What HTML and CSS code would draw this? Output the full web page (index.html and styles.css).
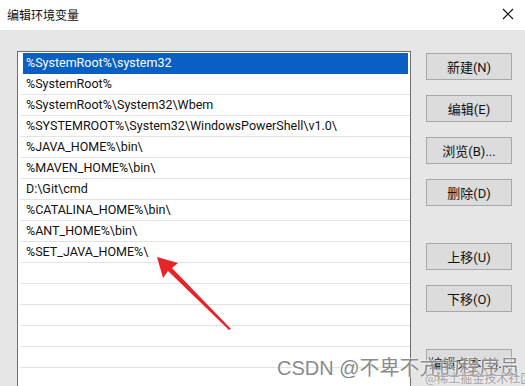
FILE: index.html
```html
<!DOCTYPE html>
<html lang="zh-CN">
<head>
    <meta charset="UTF-8">
    <title>编辑环境变量</title>
    <link rel="stylesheet" href="styles.css">
</head>
<body>
    <div class="dialog">
        <div class="titlebar">
            <span class="title">编辑环境变量</span>
            <svg class="close" width="12" height="12" viewBox="0 0 12 12">
                <path d="M1 1 L11 11 M11 1 L1 11" stroke="#111" stroke-width="1.2" fill="none"/>
            </svg>
        </div>

        <div class="content">
            <!-- lista de caminhos -->
            <div class="list">
                <div class="row selected">%SystemRoot%\system32</div>
                <div class="row">%SystemRoot%</div>
                <div class="row">%SystemRoot%\System32\Wbem</div>
                <div class="row">%SYSTEMROOT%\System32\WindowsPowerShell\v1.0\</div>
                <div class="row">%JAVA_HOME%\bin\</div>
                <div class="row">%MAVEN_HOME%\bin\</div>
                <div class="row">D:\Git\cmd</div>
                <div class="row">%CATALINA_HOME%\bin\</div>
                <div class="row">%ANT_HOME%\bin\</div>
                <div class="row">%SET_JAVA_HOME%\</div>
                <div class="row"></div>
                <div class="row"></div>
                <div class="row"></div>
                <div class="row"></div>
                <div class="row"></div>
                <div class="row"></div>
            </div>

            <!-- botões -->
            <div class="buttons">
                <button>新建(N)</button>
                <button>编辑(E)</button>
                <button>浏览(B)...</button>
                <button>删除(D)</button>
                <button class="spaced">上移(U)</button>
                <button>下移(O)</button>
                <button class="spaced">编辑文本(T)...</button>
            </div>
        </div>
    </div>

    <svg class="arrow" width="525" height="386" viewBox="0 0 525 386">
        <polygon points="157,257 178,263 172,268 231,329 229,330 168,271 163,278" fill="#e8232a"/>
    </svg>

    <div class="watermark">CSDN @不卑不亢的程序员</div>
    <div class="watermark-small">@稀土掘金技术社区</div>
</body>
</html>
```

FILE: styles.css
```css
body {
    margin: 0;
    padding: 0;
    width: 525px;
    height: 386px;
    overflow: hidden;
    position: relative;
    font-family: Roboto, "Noto Sans CJK SC", sans-serif;
    background-color: #e6e6e6;
}

.titlebar {
    height: 30px;
    background-color: #fff;
    display: flex;
    align-items: center;
    justify-content: space-between;
    padding: 0 11px 2px 7px;
    box-sizing: border-box;
}

.title {
    font-family: "Noto Sans CJK SC", sans-serif;
    font-size: 12px;
    color: #111;
}

.content {
    display: flex;
    padding: 21px 0 0 17px;
    gap: 15px;
}

.list {
    width: 390px;
    height: 340px;
    background-color: #fff;
    border: 1px solid #6e6e6e;
    padding: 0 0 0 2px;
    overflow: hidden;
}

.row {
    height: 20px;
    line-height: 20px;
    border-bottom: 1px solid #e3e3e3;
    padding-left: 6px;
    font-size: 12.5px;
    color: #111;
    white-space: nowrap;
    overflow: hidden;
}

.row.selected {
    margin: 1px 2px 0 3px;
    padding-left: 3px;
    height: 20px;
    background-color: #0a5fc3;
    color: #fff;
    border-bottom-color: #0a5fc3;
}

.buttons {
    display: flex;
    flex-direction: column;
    gap: 15px;
    padding-top: 2px;
}

button {
    width: 86px;
    height: 27px;
    background-color: #dcdcdc;
    border: 1px solid #a8a8a8;
    font-family: Roboto, "Noto Sans CJK SC", sans-serif;
    font-size: 13px;
    color: #111;
    padding: 0;
    white-space: nowrap;
}

button.spaced {
    margin-top: 22px;
}

.arrow {
    position: absolute;
    left: 0;
    top: 0;
}

.watermark {
    position: absolute;
    left: 277px;
    top: 352px;
    font-family: "Liberation Sans", "Noto Sans CJK SC", sans-serif;
    font-size: 20px;
    color: #8a8a8a;
    white-space: nowrap;
    text-shadow: 0 0 2px #fff, 0 0 2px #fff;
}

.watermark-small {
    position: absolute;
    left: 425px;
    top: 369px;
    font-family: "Noto Sans CJK SC", sans-serif;
    font-size: 12px;
    color: #a0a0a0;
    white-space: nowrap;
    text-shadow: 0 0 2px #fff;
}
```
